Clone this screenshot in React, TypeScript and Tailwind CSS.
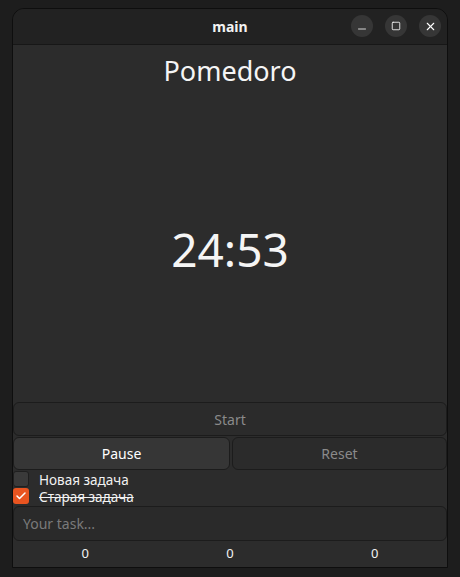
import { Minus, Square, X, Check } from "lucide-react";

const font = { fontFamily: '"Noto Sans", "Open Sans", sans-serif' };

const TitleButton = ({ children }: { children: React.ReactNode }) => (
  <div className="w-[22px] h-[22px] rounded-full bg-[#363636] flex items-center justify-center text-white">
    {children}
  </div>
);

const App = () => {
  return (
    <div
      className="w-[460px] h-[577px] bg-[#1d1d1d] pt-2 px-3 pb-[9px]"
      style={font}
    >
      <div className="h-[560px] flex flex-col rounded-t-[12px] border border-[#0e0e0e] overflow-hidden">
        {/* Title bar */}
        <div className="relative h-[36px] shrink-0 bg-[#222222] border-b border-[#171717] flex items-center justify-center">
          <span className="text-[14px] font-bold text-[#f2f2f2]">main</span>
          <div className="absolute right-[6px] top-[6px] flex gap-3">
            <TitleButton>
              <Minus size={12} strokeWidth={1.6} className="mt-[5px]" />
            </TitleButton>
            <TitleButton>
              <Square size={10} strokeWidth={2} />
            </TitleButton>
            <TitleButton>
              <X size={13} strokeWidth={2} />
            </TitleButton>
          </div>
        </div>

        {/* Content */}
        <div className="flex-1 flex flex-col bg-[#2c2c2c]">
          <div className="h-[50px] shrink-0 flex items-center justify-center">
            <span className="text-[27px] text-[#f5f5f5] leading-none">Pomedoro</span>
          </div>

          <div className="flex-1 flex items-center justify-center">
            <span className="text-[46px] text-[#f5f5f5] leading-none">24:53</span>
          </div>

          <button className="h-[34px] shrink-0 rounded-[6px] border border-[#1c1c1c] bg-[#2b2b2b] text-[14px] text-[#8a8a8a]">
            Start
          </button>

          <div className="h-[33px] shrink-0 mt-[1px] flex gap-[2px]">
            <button className="w-[217px] rounded-[6px] border border-[#1c1c1c] bg-[#363636] text-[14px] text-white">
              Pause
            </button>
            <button className="flex-1 rounded-[6px] border border-[#1c1c1c] bg-[#2b2b2b] text-[14px] text-[#8a8a8a]">
              Reset
            </button>
          </div>

          {/* Tasks */}
          <div className="h-[17px] shrink-0 pt-[1px] flex items-start gap-[10px]">
            <div className="w-[16px] h-[16px] rounded-[3px] bg-[#3a3a3a] border border-[#1f1f1f]" />
            <span className="text-[13.5px] text-[#f2f2f2] leading-[14px] pt-[2px]">Новая задача</span>
          </div>
          <div className="h-[17px] shrink-0 pt-[1px] flex items-start gap-[10px]">
            <div className="w-[16px] h-[16px] rounded-[3px] bg-[#e95420] flex items-center justify-center text-white">
              <Check size={12} strokeWidth={3} />
            </div>
            <span className="text-[13.5px] text-[#f2f2f2] leading-[14px] pt-[2px] line-through">Старая задача</span>
          </div>

          <div className="h-[35px] shrink-0 mt-[2px] rounded-[6px] border border-[#1c1c1c] bg-[#2a2a2a] flex items-center px-[9px]">
            <span className="text-[14px] text-[#7a7a7a]">Your task...</span>
          </div>

          <div className="h-[26px] shrink-0 grid grid-cols-3 items-center text-[13px] text-[#f2f2f2] text-center">
            <span>0</span>
            <span>0</span>
            <span>0</span>
          </div>
        </div>
      </div>
    </div>
  );
};

export default App;
